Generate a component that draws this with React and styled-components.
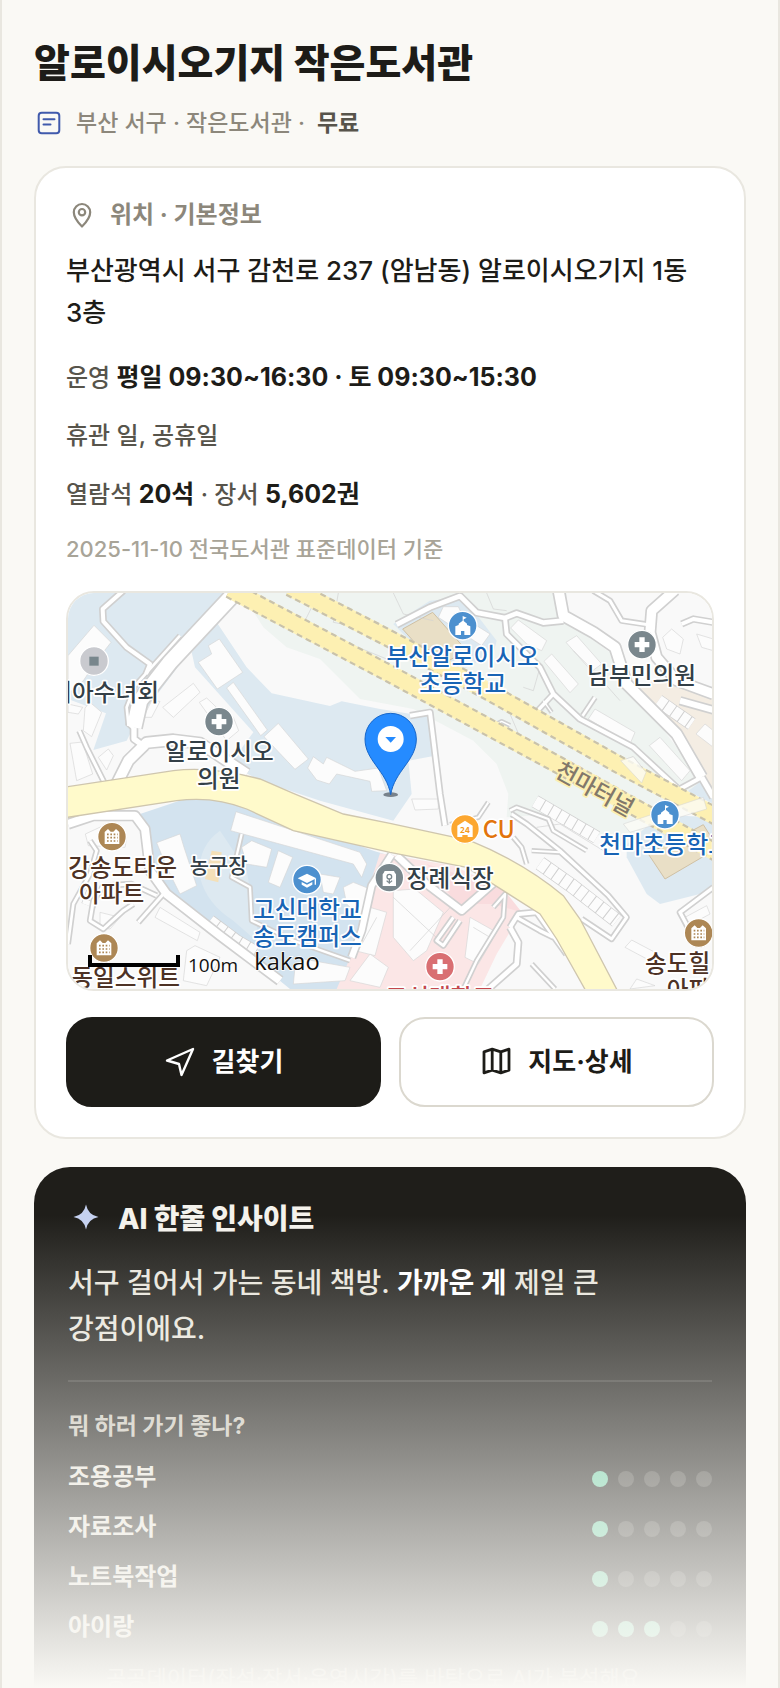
import React from "react";
import styled, { createGlobalStyle } from "styled-components";

const activities = [
  { name: "조용공부", score: 1 },
  { name: "자료조사", score: 1 },
  { name: "노트북작업", score: 1 },
  { name: "아이랑", score: 3 },
];

// white streets with a grey casing: [points, width]
const streets = [
  ["540,10 330,235 240,350 222,430", 44],
  ["190,20 128,75 130,112 200,190 270,240 258,270", 12],
  ["360,155 225,305 200,370 205,420 222,435", 8],
  ["58,440 80,490 135,600", 9],
  ["222,430 222,465 240,478", 16],
  ["165,610 205,530 260,476 340,468 420,478 470,510 560,570", 30],
  ["1010,122 1110,70 1200,36 1250,86 1335,102 1370,88 1450,116 1510,110", 14],
  ["1496,20 1510,95 1600,145 1665,190 1700,300 1790,390 1850,450 1925,580", 30],
  ["1335,102 1340,150 1440,250 1480,330 1560,405 1720,490 1850,610", 12],
  ["1480,330 1405,410", 10],
  ["1450,350 1475,385", 4],
  ["1568,395 1605,340", 8],
  ["1300,425 1325,412 1350,424", 4],
  ["1845,18 1775,80 1770,145 1790,220 1850,290 1960,330", 28],
  ["1600,20 1650,50 1685,110 1765,122", 9],
  ["1860,350 1960,378", 18],
  ["1865,120 1900,105 1960,115", 12],
  ["1050,395 1110,385 1140,630 1155,725", 12],
  ["1925,580 1850,620", 12],
  ["1925,580 1960,640", 16],
  ["24,720 100,695 225,695 255,735 270,860 320,930 480,1055 660,1190", 24],
  ["24,1080 40,960 90,870 110,800 90,770", 8],
  ["310,930 235,1015", 9],
  ["290,935 215,900 130,905 100,950 90,1010 130,1035 190,980 220,960", 9],
  ["545,750 515,880 570,910 575,1010 700,1070 870,1130", 7],
  ["995,812 935,905 905,1040 875,1120", 18],
  ["1170,722 1255,700 1285,655", 6],
  ["1355,690 1400,720 1500,800 1645,935 1700,1000 1655,1065 1565,1005", 9],
  ["1350,680 1370,670 1465,705 1480,740 1580,800", 7],
  ["1360,760 1385,790 1400,840", 7],
  ["1415,800 1500,805 1640,930", 6],
  ["1010,815 1100,900 1205,980 1320,880", 20],
  ["1180,1000 1130,1070 1150,1085 1200,1010", 9],
  ["1300,970 1335,930 1330,1000 1250,1130 1210,1215", 7],
  ["1350,1030 1375,990 1430,985 1520,1110", 12],
  ["1350,1030 1375,1075 1370,1140 1285,1215", 14],
  ["1370,1000 1440,1040 1480,1060", 10],
  ["1415,1140 1485,1215", 7],
  ["1960,910 1860,985 1900,1060", 10],
];

const buildings = [
  "415,235 455,210 445,185 478,165 548,265 472,315",
  "500,312 520,295 622,438 602,455",
  "612,458 655,418 745,525 705,556",
  "743,552 760,518 790,540 800,520 885,562 955,552 980,620 935,622 930,592 830,570 808,600 770,588",
  "24,215 102,124 153,175 110,230 70,290 24,330",
  "308,370 400,298 420,325 340,400",
  "418,355 440,342 480,380 520,400 536,440 500,470 450,400",
  "75,372 90,355 125,385 95,458 70,440",
  "30,478 68,474 98,570 50,590",
  "115,520 145,495 160,515 140,558",
  "24,360 68,370 55,390 24,385",
  "250,400 275,350 300,352 275,400",
  "1135,100 1150,68 1195,68 1210,100 1290,150 1265,185",
  "1352,132 1375,108 1460,170 1445,200 1400,180",
  "1518,175 1550,155 1625,240 1595,262",
  "1452,232 1475,210 1555,300 1530,326",
  "1585,405 1605,375 1725,445 1710,480",
  "1768,485 1800,460 1890,560 1865,590",
  "1808,160 1835,135 1870,165 1860,210 1820,195",
  "1910,150 1960,165 1960,200 1925,190",
  "1682,530 1720,518 1758,565 1745,597",
  "1908,450 1935,420 1960,440 1960,490",
  "528,683 900,805 920,840 905,880 880,840 512,740",
  "290,776 360,750 372,790 410,905 360,930 320,850",
  "545,790 575,770 635,795 620,850 560,840",
  "655,800 698,820 660,910 625,895",
  "780,870 840,880 820,930 790,925",
  "850,910 880,895 930,915 900,1000 860,960",
  "705,1150 730,1125 870,1150 855,1190 700,1200",
  "76,750 130,725 200,760 195,790 85,785",
  "120,985 180,1000 150,1035 120,1030",
  "300,970 420,1045 412,1070 285,1000",
  "380,1100 405,1085 480,1120 440,1205 370,1190",
  "885,1100 930,970 980,985 945,1115",
  "1000,920 1065,915 1150,985 1100,1100 1060,1130 1000,1060",
  "1230,1000 1310,1045 1255,1140 1215,1120",
  "870,1190 930,1110 985,1150 960,1210",
  "1055,645 1135,645 1135,675 1065,678",
  "1695,1090 1715,1068 1785,1105 1770,1130",
  "1710,1215 1730,1185 1785,1205",
  "1875,1000 1940,965 1950,990 1885,1025",
];

// rows of small terraced houses
const terraces = [
  ["1425,652 1610,760", 36],
  ["1440,838 1535,905 1670,1010", 40],
  ["1795,350 1895,420", 36],
  ["450,1010 530,1070 590,1105", 34],
  ["100,925 85,965", 40],
];

const places = [
  { kind: "plain", color: "#c9cacf", x: 102, y: 231 },
  { kind: "cross", color: "#7a878d", x: 477, y: 413 },
  { kind: "school", color: "#4c90cf", x: 1208, y: 125 },
  { kind: "cross", color: "#7a878d", x: 1746, y: 182 },
  { kind: "school", color: "#4c90cf", x: 1815, y: 692 },
  { kind: "shop", color: "#fca730", x: 1215, y: 735 },
  { kind: "flats", color: "#ad8755", x: 156, y: 758 },
  { kind: "flats", color: "#ad8755", x: 132, y: 1092 },
  { kind: "flats", color: "#ad8755", x: 1916, y: 1047 },
  { kind: "college", color: "#4c90cf", x: 741, y: 887 },
  { kind: "funeral", color: "#7a878d", x: 988, y: 881 },
  { kind: "cross", color: "#d96f72", x: 1140, y: 1148 },
];

const labels = [
  { text: "리아수녀회", x: 297, y: 350, anchor: "end" },
  { text: "알로이시오", x: 478, y: 528 },
  { text: "의원", x: 476, y: 608 },
  { text: "부산알로이시오", x: 1208, y: 243, color: "#1864b5" },
  { text: "초등학교", x: 1208, y: 323, color: "#1864b5" },
  { text: "남부민의원", x: 1745, y: 300 },
  { text: "CU", x: 1268, y: 763, color: "#e2740c", anchor: "start" },
  { text: "강송도타운", x: 188, y: 875, color: "#4d3225" },
  { text: "아파트", x: 155, y: 953, color: "#4d3225" },
  { text: "농구장", x: 476, y: 868, size: 63 },
  { text: "동일스위트", x: 197, y: 1205, color: "#4d3225" },
  { text: "고신대학교", x: 742, y: 1003, color: "#1864b5" },
  { text: "송도캠퍼스", x: 742, y: 1083, color: "#1864b5" },
  { text: "장례식장", x: 1040, y: 908, anchor: "start" },
  { text: "천마초등학교", x: 1618, y: 808, color: "#1864b5", anchor: "start" },
  { text: "송도힐", x: 1755, y: 1163, color: "#4d3225", anchor: "start" },
  { text: "아파트", x: 1820, y: 1243, color: "#4d3225", anchor: "start" },
  { text: "고신대학교", x: 1140, y: 1265, color: "#c4474d" },
];

const PlaceGlyph = ({ kind }) => {
  switch (kind) {
    case "plain":
      return <rect x="-14" y="-13" width="28" height="27" fill="#78868c" />;
    case "cross":
      return <path d="M-8-22H8V-8H22V8H8V22H-8V8H-22V-8H-8Z" fill="#fff" />;
    case "school":
      return (
        <path
          d="M-22 28V2L-12-2V-6L0-15V-29L12-24 3-19V-14L13-6V-2L23 2V28H5V16H-5V28Z"
          fill="#fff"
        />
      );
    case "flats":
      return (
        <>
          <path d="M-22 22V-14L-12-23-4-15H4L12-23 22-14V22Z" fill="#fff" />
          <path
            d="M-15-7H17M-15 3H17M-15 13H17"
            stroke="#ad8755"
            strokeWidth="5"
            strokeDasharray="5 5"
          />
        </>
      );
    case "college":
      return (
        <>
          <path d="M-28-4 0-18 28-4 0 10Z" fill="#fff" />
          <path d="M-16 7 0 15 16 7V15L0 24-16 15Z" fill="#fff" />
          <path d="M25-3V15" stroke="#fff" strokeWidth="4" />
        </>
      );
    case "shop":
      return (
        <>
          <path d="M-23 24V-10L0-25 23-10V24H8V18H-8V24Z" fill="#fff" />
          <text
            y="12"
            fontSize="25"
            fontWeight="700"
            textAnchor="middle"
            fill="#f59a1b"
          >
            24
          </text>
        </>
      );
    default:
      return (
        <>
          <path d="M-20 25V-10Q-16-14-14-20H14Q16-14 20-10V25Z" fill="#fff" />
          <circle cy="-3" r="7" fill="none" stroke="#7a878d" strokeWidth="4" />
          <path
            d="M0 4V18M-8 9Q0 20 8 9"
            fill="none"
            stroke="#7a878d"
            strokeWidth="4"
          />
        </>
      );
  }
};

const AreaMap = () => (
  <MapSvg
    viewBox="24 27 1932 1188"
    preserveAspectRatio="xMidYMid slice"
    role="img"
    aria-label="알로이시오기지 주변 지도"
  >
    <rect x="24" y="27" width="1932" height="1188" fill="#f9f9f9" />
    <g fill="#dde9f1">
      <path d="M24 27H520L225 420 200 470 100 498 138 388 24 345Z" />
      <path d="M470 115 560 250 635 328 810 366 845 352 960 375 1115 400 1125 515 1045 530 1055 630 1000 710 780 650 600 590 510 540 580 445 405 250 395 205Z" />
      <path d="M1700 715 1760 690 1960 700V920L1800 960 1760 930 1700 820Z" />
      <path d="M1880 620 1960 560V660Z" />
    </g>
    <path
      d="M545 27H1520V110L1670 220 1700 310 1790 410 1925 590 1860 640 1690 790 1480 690 1340 700 1345 630 1310 540 1240 470 1060 375 900 345 780 225 680 190 610 130Z"
      fill="#eff4f1"
    />
    <path
      d="M1000 120 1110 50 1210 40 1310 170 1300 210 1180 270 1080 200Z"
      fill="#dde9f1"
    />
    <path
      d="M1715 300 1800 290 1960 330V640L1840 440 1730 340Z"
      fill="#f4ede3"
    />
    <path
      d="M240 690 390 640 560 660 940 800 990 815 930 910 870 1130 850 1215H690L440 1010 290 890Z"
      fill="#d3e3ef"
    />
    <path
      d="M480 740Q410 790 420 880 440 960 520 1010L600 1080 560 860Z"
      fill="#dde9f1"
    />
    <path
      d="M960 808 1180 845 1330 915 1385 985 1340 1060 1310 1110 1260 1215H830L875 1110 930 900Z"
      fill="#fbe6e6"
    />
    <path d="M1100 840 1330 915 1385 985 1300 960 1190 960Z" fill="#f9dcde" />
    <path
      d="M1028 135 1118 85 1220 200 1130 250Z"
      fill="#e9dfc6"
      stroke="#cfc0a4"
      strokeWidth="3"
    />
    <path
      d="M1765 810 1930 722 1960 770V800L1815 885Z"
      fill="#e9dfc6"
      stroke="#cfc0a4"
      strokeWidth="3"
    />
    <path d="M455 800 485 805 475 895 435 885Z" fill="#f4e0b8" />

    <g fill="#fcfcfc" stroke="#d6d6d6" strokeWidth="2">
      {buildings.map((points) => (
        <polygon key={points} points={points} />
      ))}
    </g>
    <g fill="none">
      {terraces.map(([points, width]) => (
        <g key={points}>
          <polyline points={points} stroke="#d0d0d0" strokeWidth={width + 4} />
          <polyline
            points={points}
            stroke="#fcfcfc"
            strokeWidth={width}
            strokeDasharray="25 3"
          />
        </g>
      ))}
    </g>
    <g fill="none" stroke="#d2d2d2" strokeWidth="2">
      <path d="M1000 27 1030 90 1120 110M835 27 820 115 900 130M735 110 760 60M1280 27 1300 75 1340 80M1240 300 1300 310 1350 390 1380 460M1400 200 1440 250 1420 320 1390 310M1540 200 1600 260 1680 350M870 180 980 225" />
      <path d="M1000 940 1150 1080M1050 1100 1180 960M900 1090 950 1000M1240 1030 1290 1060M1430 730 1500 720 1630 800" />
    </g>

    <g fill="none" strokeLinejoin="round">
      {streets.map(([points, width]) => (
        <polyline
          key={points}
          points={points}
          stroke="#d0d0d0"
          strokeWidth={width + 10}
        />
      ))}
      {streets.map(([points, width]) => (
        <polyline
          key={points}
          points={points}
          stroke="#fff"
          strokeWidth={width}
        />
      ))}
    </g>

    <path
      d="M10 610 340 560Q450 545 600 585L700 628 850 690 990 718 1230 770Q1390 835 1510 935L1560 1005 1675 1225H1580L1490 1065 1440 990 1330 920 1220 850 990 805 700 740 560 675Q460 635 350 650L10 702Z"
      fill="#fffacb"
      stroke="#cfc6ae"
      strokeWidth="4"
    />
    <g fill="none">
      {["510,16 1000,275 1490,540 1970,806", "690,10 990,165 1280,320 1690,550 1970,698"].map(
        (points) => (
          <g key={points}>
            <polyline points={points} stroke="#fdf2bb" strokeWidth="54" />
            <polyline
              points={points}
              stroke="#c9c2ab"
              strokeWidth="56"
              strokeDasharray="18 12"
            />
            <polyline points={points} stroke="#fdf0b2" strokeWidth="43" />
          </g>
        )
      )}
    </g>
    <path
      d="M1682 530 1720 518 1758 565 1745 597Z M1690 720 1930 640 1940 675 1710 745Z"
      fill="#fcfcf6"
      stroke="#d6d6d6"
      strokeWidth="2"
      opacity="0.8"
    />

    {places.map(({ kind, color, x, y }) => (
      <g key={`${x}-${y}`} transform={`translate(${x} ${y})`}>
        <circle r="43" fill={color} stroke="#fff" strokeWidth="4" />
        <PlaceGlyph kind={kind} />
      </g>
    ))}
    {labels.map(({ text, x, y, color, size, anchor }) => (
      <MapLabel
        key={`${x}-${y}`}
        x={x}
        y={y}
        fill={color || "#333f47"}
        fontSize={size || 71}
        textAnchor={anchor || "middle"}
      >
        {text}
      </MapLabel>
    ))}
    <MapLabel
      transform="translate(1592 637) rotate(29)"
      fill="#82786a"
      stroke="#fdf0b2"
      fontSize="70"
      textAnchor="middle"
    >
      천마터널
    </MapLabel>

    <path
      d="M90 1113V1143H354V1113"
      fill="none"
      stroke="#000"
      strokeWidth="12"
    />
    <MapCredit x="384" y="1164" fontSize="57">
      100m
    </MapCredit>
    <MapCredit x="583" y="1158" fontSize="71" fontWeight="500">
      kakao
    </MapCredit>

    <ellipse cx="992" cy="632" rx="22" ry="7" fill="#4d5560" opacity="0.7" />
    <path
      d="M992 632C980 560 915 530 915 465a77 77 0 0 1 154 0C1069 530 1004 560 992 632Z"
      fill="#258bff"
      stroke="#1766c9"
      strokeWidth="3"
    />
    <circle cx="992" cy="465" r="39" fill="#fff" />
    <path d="M976 459H1008L992 476Z" fill="#258bff" />
  </MapSvg>
);

const App = () => {
  return (
    <>
      <GlobalStyle />
      <Screen>
        <Header>
          <h1>알로이시오기지 작은도서관</h1>
          <p>
            <svg width="30" height="30" viewBox="0 0 30 30" fill="none">
              <rect
                x="4.7"
                y="4.7"
                width="20.6"
                height="20.6"
                rx="3"
                stroke="#405aac"
                strokeWidth="2"
              />
              <path
                d="M9.5 11.2H20.5M9.5 16.4H16.5"
                stroke="#405aac"
                strokeWidth="2"
                strokeLinecap="round"
              />
            </svg>
            <span>부산 서구 · 작은도서관 ·</span>
            <strong>무료</strong>
          </p>
        </Header>

        <InfoCard>
          <CardLabel>
            <svg width="32" height="32" viewBox="0 0 32 32" fill="none">
              <path
                d="M16 27.5C12.5 24 7.8 18.8 7.8 13.2a8.2 8.2 0 0 1 16.4 0C24.2 18.8 19.5 24 16 27.5Z"
                stroke="#8c877b"
                strokeWidth="2.2"
                strokeLinejoin="round"
              />
              <circle
                cx="16"
                cy="13.2"
                r="3.2"
                stroke="#8c877b"
                strokeWidth="2.2"
              />
            </svg>
            위치 · 기본정보
          </CardLabel>
          <Address>
            부산광역시 서구 감천로 237 (암남동) 알로이시오기지 1동 3층
          </Address>
          <Facts>
            <li>
              운영 <b>평일 09:30~16:30 · 토 09:30~15:30</b>
            </li>
            <li>휴관 일, 공휴일</li>
            <li>
              열람석 <b>20석</b> · 장서 <b>5,602권</b>
            </li>
          </Facts>
          <Source>2025-11-10 전국도서관 표준데이터 기준</Source>
          <MapFrame>
            <AreaMap />
          </MapFrame>
          <Actions>
            <ActionButton type="button" $primary>
              <svg width="32" height="32" viewBox="0 0 32 32" fill="none">
                <path
                  d="M3 14.5 29 3 17.5 29 15 18Z"
                  stroke="currentColor"
                  strokeWidth="2.4"
                  strokeLinejoin="round"
                />
              </svg>
              길찾기
            </ActionButton>
            <ActionButton type="button">
              <svg width="32" height="32" viewBox="0 0 32 32" fill="none">
                <path
                  d="M4 5.8 12.200 3.2 20.800 5.8 29 3.2V24.2L20.800 26.8 12.200 24.2 4 26.8ZM12.200 3.2V24.2M20.800 5.8V26.8"
                  stroke="currentColor"
                  strokeWidth="2.8"
                  strokeLinejoin="round"
                />
              </svg>
              지도·상세
            </ActionButton>
          </Actions>
        </InfoCard>

        <InsightCard>
          <h2>
            <svg width="36" height="36" viewBox="0 0 36 36">
              <path
                d="M18 3.5Q20 14 30.5 16 20 18 18 28.5 16 18 5.5 16 16 14 18 3.5Z"
                fill="#c5d1f0"
              />
            </svg>
            AI 한줄 인사이트
          </h2>
          <Summary>
            서구 걸어서 가는 동네 책방. <b>가까운 게</b> 제일 큰 강점이에요.
          </Summary>
          <h3>뭐 하러 가기 좋나?</h3>
          <ul>
            {activities.map(({ name, score }) => (
              <ScoreRow key={name}>
                <span>{name}</span>
                <Dots role="img" aria-label={`5점 중 ${score}점`}>
                  {[1, 2, 3, 4, 5].map((n) => (
                    <Dot key={n} $on={n <= score} />
                  ))}
                </Dots>
              </ScoreRow>
            ))}
          </ul>
          <Note>공공데이터(좌석·장서·운영시간)를 바탕으로 AI가 분석해요</Note>
        </InsightCard>
        <Fade />
      </Screen>
    </>
  );
};

const GlobalStyle = createGlobalStyle`
  * {
    box-sizing: border-box;
    margin: 0;
    padding: 0;
  }
  body {
    background: #faf9f5;
    color: #1d1c18;
    font-family: Inter, "Noto Sans CJK KR", sans-serif;
    word-break: keep-all;
  }
  ul {
    list-style: none;
  }
  svg {
    flex: none;
    display: block;
  }
`;

const Screen = styled.main`
  position: relative;
  height: 100vh;
  overflow: hidden;
  padding: 37px 32px 0;
  border: solid #e9e7e0;
  border-width: 0 2px;
`;

const Header = styled.header`
  margin-bottom: 27px;
  h1 {
    font-size: 39px;
    font-weight: 800;
    line-height: 52px;
    margin-bottom: 18px;
  }
  p {
    display: flex;
    align-items: center;
    gap: 12px;
    font-size: 23px;
    font-weight: 500;
    line-height: 32px;
    color: #8c877b;
    strong {
      font-weight: 700;
      color: #57544b;
    }
  }
`;

const InfoCard = styled.section`
  padding: 30px;
  background: #fff;
  border: 2px solid #e9e7e0;
  border-radius: 32px;
`;

const CardLabel = styled.h2`
  display: flex;
  align-items: center;
  gap: 12px;
  font-size: 24px;
  font-weight: 700;
  line-height: 34px;
  color: #8c877b;
`;

const Address = styled.p`
  margin-top: 18px;
  font-size: 26px;
  font-weight: 500;
  line-height: 42px;
`;

const Facts = styled.ul`
  display: grid;
  gap: 18px;
  margin-top: 23px;
  font-size: 24px;
  font-weight: 500;
  line-height: 40px;
  color: #57544b;
  b {
    font-size: 25px;
    font-weight: 700;
    color: #1d1c18;
  }
`;

const Source = styled.p`
  margin-top: 16px;
  font-size: 22px;
  font-weight: 500;
  line-height: 36px;
  color: #a8a498;
`;

const MapFrame = styled.div`
  height: 400px;
  margin-top: 24px;
  border: 2px solid #e9e7e0;
  border-radius: 28px;
  overflow: hidden;
`;

const MapSvg = styled.svg`
  width: 100%;
  height: 100%;
  font-family: "Noto Sans CJK KR", sans-serif;
`;

const MapLabel = styled.text`
  font-weight: 500;
  paint-order: stroke;
  stroke: ${({ stroke }) => stroke || "#fff"};
  stroke-width: 10px;
  stroke-linejoin: round;
`;

const MapCredit = styled.text`
  font-family: "Open Sans", sans-serif;
  fill: #111;
  paint-order: stroke;
  stroke: #fff;
  stroke-width: 4px;
`;

const Actions = styled.div`
  display: grid;
  grid-template-columns: 1fr 1fr;
  gap: 18px;
  margin-top: 26px;
`;

const ActionButton = styled.button`
  display: flex;
  align-items: center;
  justify-content: center;
  gap: 16px;
  height: 90px;
  border: 2px solid ${({ $primary }) => ($primary ? "#1d1c18" : "#dbd8cf")};
  border-radius: 26px;
  background: ${({ $primary }) => ($primary ? "#1d1c18" : "#fff")};
  color: ${({ $primary }) => ($primary ? "#fff" : "#1d1c18")};
  font-family: inherit;
  font-size: 26px;
  font-weight: 700;
  line-height: 34px;
  cursor: pointer;
`;

const InsightCard = styled.section`
  margin-top: 28px;
  padding: 34px;
  border-radius: 36px;
  background: #1f1e1a;
  color: #f4f2ec;
  h2 {
    display: flex;
    align-items: center;
    gap: 14px;
    font-size: 28px;
    font-weight: 800;
    line-height: 36px;
  }
  h3 {
    margin: 28px 0 12px;
    font-size: 23px;
    font-weight: 700;
    line-height: 32px;
    color: #c9c5ba;
  }
`;

const Summary = styled.p`
  padding-bottom: 28px;
  border-bottom: 2px solid #393834;
  margin-top: 23px;
  font-size: 28px;
  font-weight: 500;
  line-height: 46px;
  color: #e8e5dc;
  b {
    font-weight: 700;
    color: #fff;
  }
`;

const ScoreRow = styled.li`
  display: flex;
  align-items: center;
  justify-content: space-between;
  height: 50px;
  font-size: 24px;
  font-weight: 600;
  line-height: 32px;
  span {
    padding-bottom: 4px;
    color: #e8e5dc;
  }
`;

const Dots = styled.div`
  display: flex;
  gap: 10px;
`;

const Dot = styled.i`
  width: 16px;
  height: 16px;
  border-radius: 50%;
  background: ${({ $on }) => ($on ? "#6fcfa6" : "#45443f")};
`;

const Note = styled.p`
  margin-top: 8px;
  padding-left: 38px;
  font-size: 22px;
  line-height: 32px;
  color: #a8a498;
`;

// lets the page run out softly at the bottom of the window
const Fade = styled.div`
  position: absolute;
  inset: auto 0 0;
  height: 28%;
  background: linear-gradient(rgba(250, 249, 245, 0), #faf9f5);
  pointer-events: none;
`;

export default App;
